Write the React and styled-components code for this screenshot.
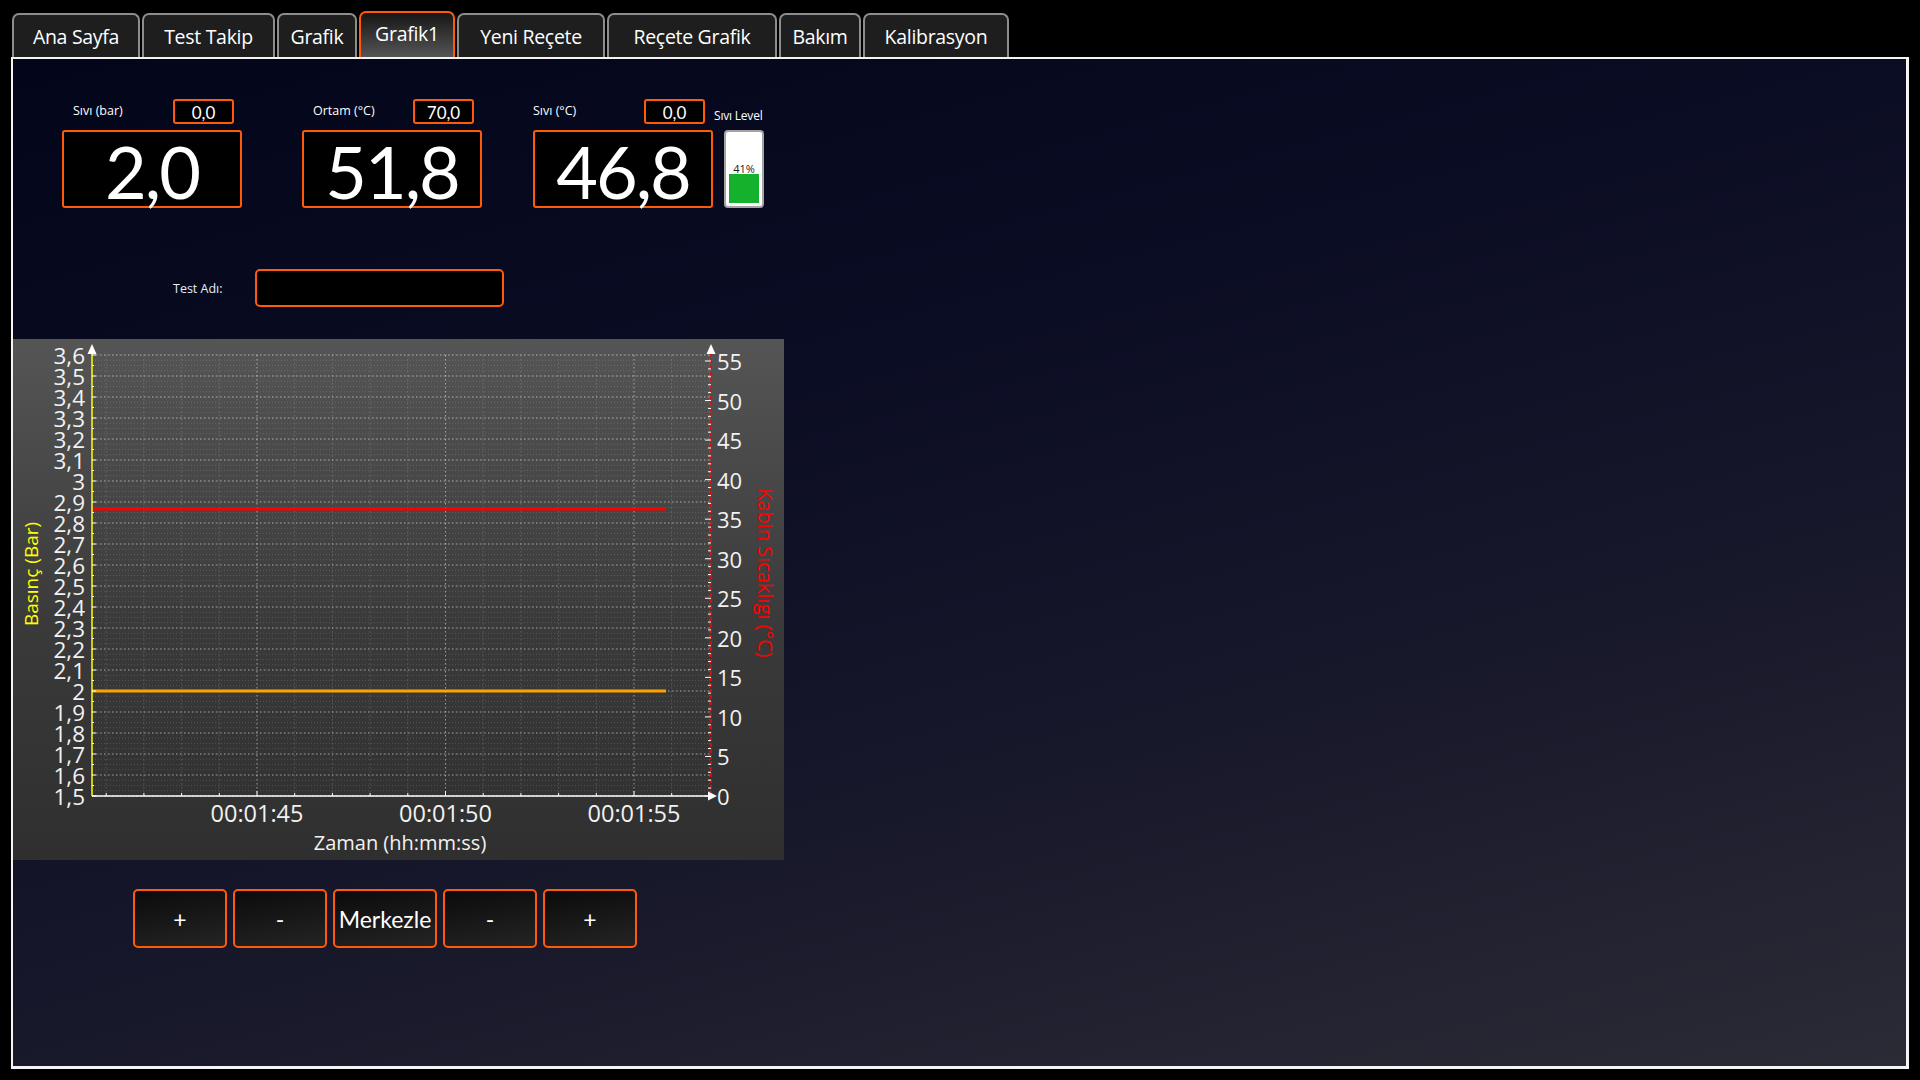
import React from 'react';
import styled, { createGlobalStyle } from 'styled-components';

const ORANGE = '#ff5a0a';

const GlobalStyle = createGlobalStyle`
  html, body {
    margin: 0;
    padding: 0;
    background: #000;
  }
  body {
    width: 1920px;
    height: 1080px;
    overflow: hidden;
    font-family: "Open Sans", "Noto Sans", sans-serif;
  }
`;

const Screen = styled.div`
  width: 1920px;
  height: 1080px;
  background: #000;
  box-sizing: border-box;
  padding-top: 11px;
  display: flex;
  flex-direction: column;
`;

const TabBar = styled.div`
  display: flex;
  align-items: flex-end;
  gap: 2px;
  padding-left: 12px;
  height: 46px;
`;

const Tab = styled.div`
  width: ${p => p.$w}px;
  height: ${p => (p.$active ? 46 : 44)}px;
  box-sizing: border-box;
  border: 2px solid ${p => (p.$active ? ORANGE : '#8d8d8d')};
  border-bottom: none;
  border-radius: 7px 7px 0 0;
  background: ${p => (p.$active ? 'linear-gradient(#161616, #555555)' : '#1e1e1e')};
  color: #fff;
  font-size: 19.5px;
  letter-spacing: -0.3px;
  display: flex;
  align-items: center;
  justify-content: center;
  padding-bottom: ${p => (p.$active ? 3 : 0)}px;
  white-space: nowrap;
`;

const Panel = styled.div`
  margin-left: 11px;
  width: 1898px;
  height: 1012px;
  box-sizing: border-box;
  border: 2px solid #f4f4f4;
  border-right-width: 3px;
  border-bottom-width: 3px;
  background: linear-gradient(165deg, #03051a 0%, #0b0d24 35%, #1a1a2c 70%, #2b2b36 100%);
  display: flex;
  flex-direction: column;
  padding-top: 40px;
`;

const Readouts = styled.div`
  display: flex;
  align-items: flex-start;
  padding-left: 49px;
`;

const Gauge = styled.div`
  display: flex;
  flex-direction: column;
  width: 180px;
  margin-left: ${p => p.$ml || 0}px;
`;

const GaugeHead = styled.div`
  display: flex;
  align-items: center;
  height: 25px;
  margin-bottom: 6px;
`;

const GaugeLabel = styled.span`
  font-size: 12.5px;
  color: #fff;
  padding-left: ${p => p.$pl || 0}px;
  margin-top: -3px;
  white-space: nowrap;
`;

const SetBox = styled.div`
  margin-left: auto;
  margin-right: 8px;
  width: 61px;
  height: 25px;
  box-sizing: border-box;
  border: 2px solid ${ORANGE};
  border-radius: 3px;
  background: #000;
  color: #fff;
  font-family: Lato, "Open Sans", sans-serif;
  font-size: 17px;
  display: flex;
  align-items: center;
  justify-content: center;
  padding-top: 2px;
`;

const BigBox = styled.div`
  height: 78px;
  box-sizing: border-box;
  border: 2px solid ${ORANGE};
  border-radius: 3px;
  background: #000;
  color: #fff;
  font-family: Lato, "Open Sans", sans-serif;
  font-size: 72px;
  line-height: 1;
  display: flex;
  align-items: center;
  justify-content: center;
  padding-top: 4px;
  letter-spacing: -2px;
`;

const LevelCol = styled.div`
  display: flex;
  flex-direction: column;
  margin-left: 1px;
  width: 52px;
`;

const LevelLabel = styled.div`
  height: 25px;
  margin-bottom: 6px;
  box-sizing: border-box;
  padding-bottom: 0;
  display: flex;
  align-items: flex-end;
  font-size: 12px;
  letter-spacing: -0.2px;
  color: #fff;
  white-space: nowrap;
`;

const LevelBar = styled.div`
  margin-left: 10px;
  width: 40px;
  height: 78px;
  box-sizing: border-box;
  border: 2px solid #a4a4a4;
  border-radius: 4px;
  background: #fff;
  padding: 3px;
  display: flex;
  flex-direction: column;
  justify-content: flex-end;
`;

const LevelText = styled.div`
  font-size: 11px;
  color: #222;
  text-align: center;
  margin-bottom: -2px;
`;

const LevelFill = styled.div`
  height: 29px;
  background: #14b22c;
`;

const TestRow = styled.div`
  display: flex;
  align-items: center;
  gap: 32px;
  margin-top: 61px;
  padding-left: 160px;
`;

const TestLabel = styled.span`
  font-size: 12.5px;
  color: #e8ecf5;
`;

const TestInput = styled.div`
  width: 249px;
  height: 38px;
  box-sizing: border-box;
  border: 2px solid ${ORANGE};
  border-radius: 5px;
  background: #000;
`;

const ChartBox = styled.div`
  margin-top: 32px;
  width: 771px;
  height: 521px;
  background: linear-gradient(#555555 0%, #3a3a3a 55%, #2f2f2f 100%);
`;

const ChartSvg = styled.svg`
  display: block;
  text {
    font-family: "Open Sans", "Noto Sans", sans-serif;
  }
`;

const ButtonRow = styled.div`
  display: flex;
  gap: 6px;
  margin-top: 29px;
  padding-left: 120px;
`;

const ZoomButton = styled.div`
  width: ${p => p.$w}px;
  height: 59px;
  box-sizing: border-box;
  border: 2px solid ${ORANGE};
  border-radius: 5px;
  background: linear-gradient(170deg, #0b0b0b, #242424);
  color: #fff;
  font-family: Lato, "Open Sans", sans-serif;
  font-size: 23px;
  display: flex;
  align-items: center;
  justify-content: center;
`;

const tabs = [
  ['Ana Sayfa', 128],
  ['Test Takip', 133],
  ['Grafik', 80],
  ['Grafik1', 96],
  ['Yeni Reçete', 148],
  ['Reçete Grafik', 170],
  ['Bakım', 82],
  ['Kalibrasyon', 146],
];

// chart geometry (px inside the chart box)
const X0 = 79;
const X1 = 698;
const Y0 = 16;
const Y1 = 457;
const barY = tenths => Y1 - (tenths - 15) * 21;
const tempY = t => Y1 - t * (435 / 55);
const secX = s => 244 + (s - 105) * 37.7;

function Chart() {
  const barTicks = [];
  for (let v = 15; v <= 36; v++) barTicks.push(v);
  const minorH = [];
  for (let y = Y1; y >= Y0 - 0.1; y -= 5.25) minorH.push(y);
  const secs = [];
  for (let s = 101; s <= 117; s++) secs.push(s);
  const temps = [];
  for (let t = 0; t <= 55; t++) temps.push(t);

  const fmt = v => (v % 10 === 0 ? String(v / 10) : (v / 10).toFixed(1).replace('.', ','));
  const timeLabel = s => `00:01:${String(s - 60)}`;

  return (
    <ChartSvg width="771" height="521" viewBox="0 0 771 521">
      {/* fine grid */}
      {minorH.map((y, i) => (
        <line key={'mh' + i} x1={X0} x2={X1} y1={y} y2={y}
          stroke="#ffffff" strokeOpacity="0.14" strokeWidth="1" strokeDasharray="1 2" />
      ))}
      {secs.map(s => (
        <line key={'mv' + s} x1={secX(s)} x2={secX(s)} y1={Y0} y2={Y1}
          stroke="#ffffff" strokeOpacity={s % 5 === 0 ? 0.5 : 0.18} strokeWidth="1" strokeDasharray="1.5 2.5" />
      ))}
      {barTicks.map(v => (
        <line key={'gh' + v} x1={X0} x2={X1} y1={barY(v)} y2={barY(v)}
          stroke="#ffffff" strokeOpacity="0.5" strokeWidth="1" strokeDasharray="1.5 2.5" />
      ))}

      {/* series */}
      <line x1={X0} x2={653} y1={170} y2={170} stroke="#ff0000" strokeWidth="3" />
      <line x1={X0} x2={653} y1={barY(20)} y2={barY(20)} stroke="#ffa200" strokeWidth="3" />

      {/* left axis */}
      <line x1={X0} x2={X0} y1={8} y2={Y1} stroke="#ffff00" strokeWidth="1.5" />
      {barTicks.map(v => (
        <line key={'lt' + v} x1={X0} x2={X0 + 4} y1={barY(v)} y2={barY(v)} stroke="#ffffff" strokeWidth="1" />
      ))}
      {barTicks.slice(0, -1).map(v => (
        <line key={'lm' + v} x1={X0} x2={X0 + 2} y1={barY(v) - 10.5} y2={barY(v) - 10.5} stroke="#ffffff" strokeWidth="1" />
      ))}
      <polygon points={`${X0 - 4.5},${Y0 - 1} ${X0 + 4.5},${Y0 - 1} ${X0},${Y0 - 11}`} fill="#ffffff" />
      {barTicks.map(v => (
        <text key={'ll' + v} x={72} y={barY(v)} fill="#f2f2f2" fontSize="22.5" textAnchor="end" dominantBaseline="central">
          {fmt(v)}
        </text>
      ))}
      <text x={18} y={235} fill="#ffff00" fontSize="19" textAnchor="middle" dominantBaseline="central"
        transform="rotate(-90 18 235)">
        Basınç (Bar)
      </text>

      {/* right axis */}
      <line x1={X1} x2={X1} y1={8} y2={Y1} stroke="#ff0000" strokeWidth="1.5" strokeDasharray="4 2" />
      {temps.map(t => (
        <line key={'rt' + t} x1={X1 - (t % 5 === 0 ? 6 : 3)} x2={X1} y1={tempY(t)} y2={tempY(t)} stroke="#ffffff" strokeWidth="1" />
      ))}
      <polygon points={`${X1 - 4.5},${Y0 - 1} ${X1 + 4.5},${Y0 - 1} ${X1},${Y0 - 11}`} fill="#ffffff" />
      {temps.filter(t => t % 5 === 0).map(t => (
        <text key={'rl' + t} x={704} y={tempY(t)} fill="#f2f2f2" fontSize="22" dominantBaseline="central">
          {t}
        </text>
      ))}
      <text x={752} y={234} fill="#ff0000" fontSize="20" textAnchor="middle" dominantBaseline="central"
        transform="rotate(90 752 234)">
        Kabin Sıcaklıgı (°C)
      </text>

      {/* bottom axis */}
      <line x1={X0} x2={X1} y1={Y1} y2={Y1} stroke="#ffffff" strokeWidth="1.5" />
      {secs.map(s => (
        <line key={'bt' + s} x1={secX(s)} x2={secX(s)} y1={Y1 - (s % 5 === 0 ? 5 : 3)} y2={Y1} stroke="#ffffff" strokeWidth="1" />
      ))}
      <polygon points={`${X1 - 3},${Y1 - 4.5} ${X1 - 3},${Y1 + 4.5} ${X1 + 6},${Y1}`} fill="#ffffff" />
      {[105, 110, 115].map(s => (
        <text key={'bl' + s} x={secX(s)} y={474} fill="#f2f2f2" fontSize="23.5" textAnchor="middle" dominantBaseline="central">
          {timeLabel(s)}
        </text>
      ))}
      <text x={387} y={503} fill="#f2f2f2" fontSize="20" textAnchor="middle" dominantBaseline="central">
        Zaman (hh:mm:ss)
      </text>
    </ChartSvg>
  );
}

function App() {
  return (
    <Screen>
      <GlobalStyle />
      <TabBar>
        {tabs.map(([name, w]) => (
          <Tab key={name} $w={w} $active={name === 'Grafik1'}>{name}</Tab>
        ))}
      </TabBar>
      <Panel>
        <Readouts>
          <Gauge>
            <GaugeHead>
              <GaugeLabel $pl={11}>Sıvı (bar)</GaugeLabel>
              <SetBox>0,0</SetBox>
            </GaugeHead>
            <BigBox>2,0</BigBox>
          </Gauge>
          <Gauge $ml={60}>
            <GaugeHead>
              <GaugeLabel $pl={11}>Ortam (°C)</GaugeLabel>
              <SetBox>70,0</SetBox>
            </GaugeHead>
            <BigBox>51,8</BigBox>
          </Gauge>
          <Gauge $ml={51}>
            <GaugeHead>
              <GaugeLabel>Sıvı (°C)</GaugeLabel>
              <SetBox>0,0</SetBox>
            </GaugeHead>
            <BigBox>46,8</BigBox>
          </Gauge>
          <LevelCol>
            <LevelLabel>Sıvı Level</LevelLabel>
            <LevelBar>
              <LevelText>41%</LevelText>
              <LevelFill />
            </LevelBar>
          </LevelCol>
        </Readouts>

        <TestRow>
          <TestLabel>Test Adı:</TestLabel>
          <TestInput />
        </TestRow>

        <ChartBox>
          <Chart />
        </ChartBox>

        <ButtonRow>
          <ZoomButton $w={94}>+</ZoomButton>
          <ZoomButton $w={94}>-</ZoomButton>
          <ZoomButton $w={104}>Merkezle</ZoomButton>
          <ZoomButton $w={94}>-</ZoomButton>
          <ZoomButton $w={94}>+</ZoomButton>
        </ButtonRow>
      </Panel>
    </Screen>
  );
}

export default App;
